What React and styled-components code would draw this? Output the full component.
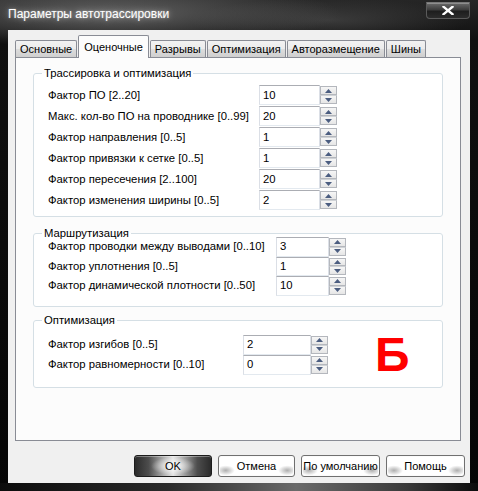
import React from "react";
import styled, { createGlobalStyle } from "styled-components";

const Global = createGlobalStyle`
  html, body { margin: 0; padding: 0; background: #000; }
  body {
    font-family: "Liberation Sans", Arial, sans-serif;
    font-size: 11px;
    color: #000;
  }
  * { box-sizing: border-box; }
`;

const Window = styled.div`
  width: 478px;
  height: 491px;
  display: flex;
  flex-direction: column;
  padding: 0 8px 8px 8px;
  background:
    radial-gradient(ellipse 230px 34px at 110px 14px, rgba(120,120,120,0.75), rgba(60,60,60,0) 100%),
    radial-gradient(ellipse 140px 22px at 330px 20px, rgba(90,90,90,0.5), rgba(60,60,60,0) 100%),
    linear-gradient(90deg, #0c0c0c 0%, #2a2a2a 35%, #6a6a6a 62%, #3a3a3a 85%, #0c0c0c 100%) bottom / 100% 8px no-repeat,
    linear-gradient(180deg, #262626 0%, #101010 40px, #050505 100%);
`;

const TitleBar = styled.div`
  height: 30px;
  display: flex;
  align-items: flex-start;
  justify-content: space-between;
`;

const Title = styled.div`
  margin-top: 7px;
  font-size: 12px;
  line-height: 15px;
  color: #fff;
  text-shadow: 0 0 6px rgba(255, 255, 255, 0.55), 0 0 2px rgba(255, 255, 255, 0.4);
`;

const CloseButton = styled.div`
  margin-top: 2px;
  width: 44px;
  height: 17px;
  border: 1px solid #5a5a5a;
  border-top-color: #777;
  border-radius: 0 0 4px 4px;
  background: linear-gradient(180deg, #6b6b6b 0%, #3c3c3c 45%, #1e1e1e 55%, #2c2c2c 100%);
  box-shadow: inset 0 1px 0 rgba(255, 255, 255, 0.25);
  display: flex;
  align-items: center;
  justify-content: center;
`;

const Client = styled.div`
  flex: 1;
  display: flex;
  flex-direction: column;
  background: #f0f0f0;
  padding: 5px 5px 6px 7px;
`;

const TabStrip = styled.div`
  height: 22px;
  display: flex;
  align-items: flex-end;
  gap: 1px;
  position: relative;
  z-index: 1;
`;

const Tab = styled.div`
  height: ${(p) => (p.$active ? 23 : 17)}px;
  margin-bottom: ${(p) => (p.$active ? -1 : 0)}px;
  padding: ${(p) => (p.$active ? "4px 5px 0" : "1px 4px 0")};
  border: 1px solid #898c95;
  border-bottom: 0;
  border-radius: 2px 2px 0 0;
  background: ${(p) =>
    p.$active
      ? "#fcfcfc"
      : "linear-gradient(180deg, #f2f2f2 0%, #ebebeb 50%, #dddddd 51%, #cfcfcf 100%)"};
  line-height: 14px;
  white-space: nowrap;
`;

const Panel = styled.div`
  flex: 1;
  margin-right: 4px;
  border: 1px solid #898c95;
  background: #fcfcfc;
  padding: 9px 17px 0 17px;
  display: flex;
  flex-direction: column;
`;

const Group = styled.fieldset`
  margin: ${(p) => p.$top}px 0 0 0;
  padding: 0 14px ${(p) => p.$bottom}px 14px;
  border: 1px solid #d5dfe5;
  border-radius: 3px;
  background: #fff;
  min-width: 0;
`;

const Caption = styled.legend`
  margin-left: -6px;
  padding: 0 2px;
  line-height: 13px;
  font-size: 11.3px;
`;

const Body = styled.div`
  display: flex;
  align-items: center;
  margin-top: ${(p) => p.$shift}px;
`;

const Rows = styled.div`
  display: grid;
  grid-template-columns: ${(p) => p.$labelWidth}px auto;
  grid-auto-rows: ${(p) => p.$rowHeight}px;
  row-gap: ${(p) => p.$gap}px;
  align-items: center;
`;

const Label = styled.div`
  white-space: nowrap;
  line-height: 13px;
  font-size: 11.3px;
`;

const Spin = styled.div`
  display: flex;
  height: 100%;
`;

const Field = styled.div`
  width: ${(p) => p.$width}px;
  height: 100%;
  border: 1px solid #dbdfe6;
  border-top-color: #abadb3;
  border-bottom-color: #e3e9ef;
  background: #fff;
  padding-left: 3px;
  display: flex;
  align-items: center;
  line-height: 13px;
  font-size: 11.3px;
`;

const Arrows = styled.div`
  width: 18px;
  height: 100%;
  display: flex;
  flex-direction: column;
  padding: 1px 1px 1px 0;
`;

const ArrowButton = styled.div`
  flex: 1;
  border: 1px solid #b4b7bd;
  ${(p) => (p.$down ? "border-top-color: #cfd2d6;" : "")}
  background: linear-gradient(180deg, #f6f6f6 0%, #e6e6e6 100%);
  display: flex;
  align-items: center;
  justify-content: center;
`;

const Mark = styled.div`
  margin-left: 46px;
  font-family: "Liberation Sans", Arial, sans-serif;
  font-weight: bold;
  font-size: 48px;
  line-height: 48px;
  color: #ff0000;
`;

const ButtonRow = styled.div`
  margin-top: 14px;
  height: 22px;
  display: flex;
  justify-content: flex-end;
  gap: 6px;
`;

const Button = styled.div`
  width: ${(p) => p.$width}px;
  height: 22px;
  border: 1px solid ${(p) => (p.$primary ? "#1c1c1c" : "#707070")};
  border-radius: 3px;
  display: flex;
  align-items: center;
  justify-content: center;
  white-space: nowrap;
  overflow: hidden;
  line-height: 13px;
  color: #000;
  background: ${(p) =>
    p.$primary
      ? `radial-gradient(ellipse 22px 9px at 50% 50%, rgba(255,255,255,0.95), rgba(255,255,255,0) 100%),
         linear-gradient(90deg, #2b2b2b 0%, #4d4d4d 18%, #b9b9b9 40%, #e4e4e4 50%, #b9b9b9 60%, #4d4d4d 82%, #2b2b2b 100%)`
      : `radial-gradient(ellipse 9px 5px at 9% 72%, rgba(160,160,160,0.85), rgba(160,160,160,0) 100%),
         radial-gradient(ellipse 9px 5px at 91% 72%, rgba(160,160,160,0.85), rgba(160,160,160,0) 100%),
         #ffffff`};
  box-shadow: ${(p) =>
    p.$primary ? "inset 0 1px 0 rgba(255,255,255,0.35)" : "inset 0 0 0 1px #fbfbfb"};
`;

const tabs = ["Основные", "Оценочные", "Разрывы", "Оптимизация", "Авторазмещение", "Шины"];

const groups = [
  {
    title: "Трассировка и оптимизация",
    top: 0,
    shift: 5,
    bottom: 6,
    labelWidth: 211,
    fieldWidth: 61,
    rowHeight: 20,
    gap: 1,
    rows: [
      ["Фактор ПО [2..20]", "10"],
      ["Макс. кол-во ПО на проводнике [0..99]", "20"],
      ["Фактор направления [0..5]", "1"],
      ["Фактор привязки к сетке [0..5]", "1"],
      ["Фактор пересечения [2..100]", "20"],
      ["Фактор изменения ширины [0..5]", "2"],
    ],
  },
  {
    title: "Маршрутизация",
    top: 10,
    shift: -3,
    bottom: 10,
    labelWidth: 228,
    fieldWidth: 53,
    rowHeight: 19.5,
    gap: 0,
    rows: [
      ["Фактор проводки между выводами [0..10]", "3"],
      ["Фактор уплотнения [0..5]", "1"],
      ["Фактор динамической плотности [0..50]", "10"],
    ],
  },
  {
    title: "Оптимизация",
    top: 7,
    shift: 4,
    bottom: 8,
    labelWidth: 195,
    fieldWidth: 68,
    rowHeight: 20,
    gap: 0,
    mark: "Б",
    rows: [
      ["Фактор изгибов [0..5]", "2"],
      ["Фактор равномерности [0..10]", "0"],
    ],
  },
];

const buttons = [
  { text: "OK", width: 78, primary: true },
  { text: "Отмена", width: 77 },
  { text: "По умолчанию", width: 79 },
  { text: "Помощь", width: 79 },
];

function Triangle({ down }) {
  return (
    <svg width="7" height="4" viewBox="0 0 7 4">
      <path d={down ? "M0 0H7L3.5 4Z" : "M0 4H7L3.5 0Z"} fill="#4b5d80" />
    </svg>
  );
}

function Spinner({ value, width }) {
  return (
    <Spin>
      <Field $width={width}>{value}</Field>
      <Arrows>
        <ArrowButton>
          <Triangle />
        </ArrowButton>
        <ArrowButton $down>
          <Triangle down />
        </ArrowButton>
      </Arrows>
    </Spin>
  );
}

function ParamGroup({ g }) {
  return (
    <Group $top={g.top} $bottom={g.bottom}>
      <Caption>{g.title}</Caption>
      <Body $shift={g.shift}>
        <Rows $labelWidth={g.labelWidth} $rowHeight={g.rowHeight} $gap={g.gap}>
          {g.rows.map(([label, value]) => (
            <React.Fragment key={label}>
              <Label>{label}</Label>
              <Spinner value={value} width={g.fieldWidth} />
            </React.Fragment>
          ))}
        </Rows>
        {g.mark && <Mark>{g.mark}</Mark>}
      </Body>
    </Group>
  );
}

export default function App() {
  return (
    <>
      <Global />
      <Window>
        <TitleBar>
          <Title>Параметры автотрассировки</Title>
          <CloseButton>
            <svg width="12" height="9" viewBox="0 0 12 9">
              <path d="M1.5 0.8L10.5 8.2M10.5 0.8L1.5 8.2" stroke="#fff" strokeWidth="2.4" strokeLinecap="square" />
            </svg>
          </CloseButton>
        </TitleBar>
        <Client>
          <TabStrip>
            {tabs.map((t) => (
              <Tab key={t} $active={t === "Оценочные"}>
                {t}
              </Tab>
            ))}
          </TabStrip>
          <Panel>
            {groups.map((g) => (
              <ParamGroup key={g.title} g={g} />
            ))}
          </Panel>
          <ButtonRow>
            {buttons.map((b) => (
              <Button key={b.text} $width={b.width} $primary={b.primary}>
                {b.text}
              </Button>
            ))}
          </ButtonRow>
        </Client>
      </Window>
    </>
  );
}
